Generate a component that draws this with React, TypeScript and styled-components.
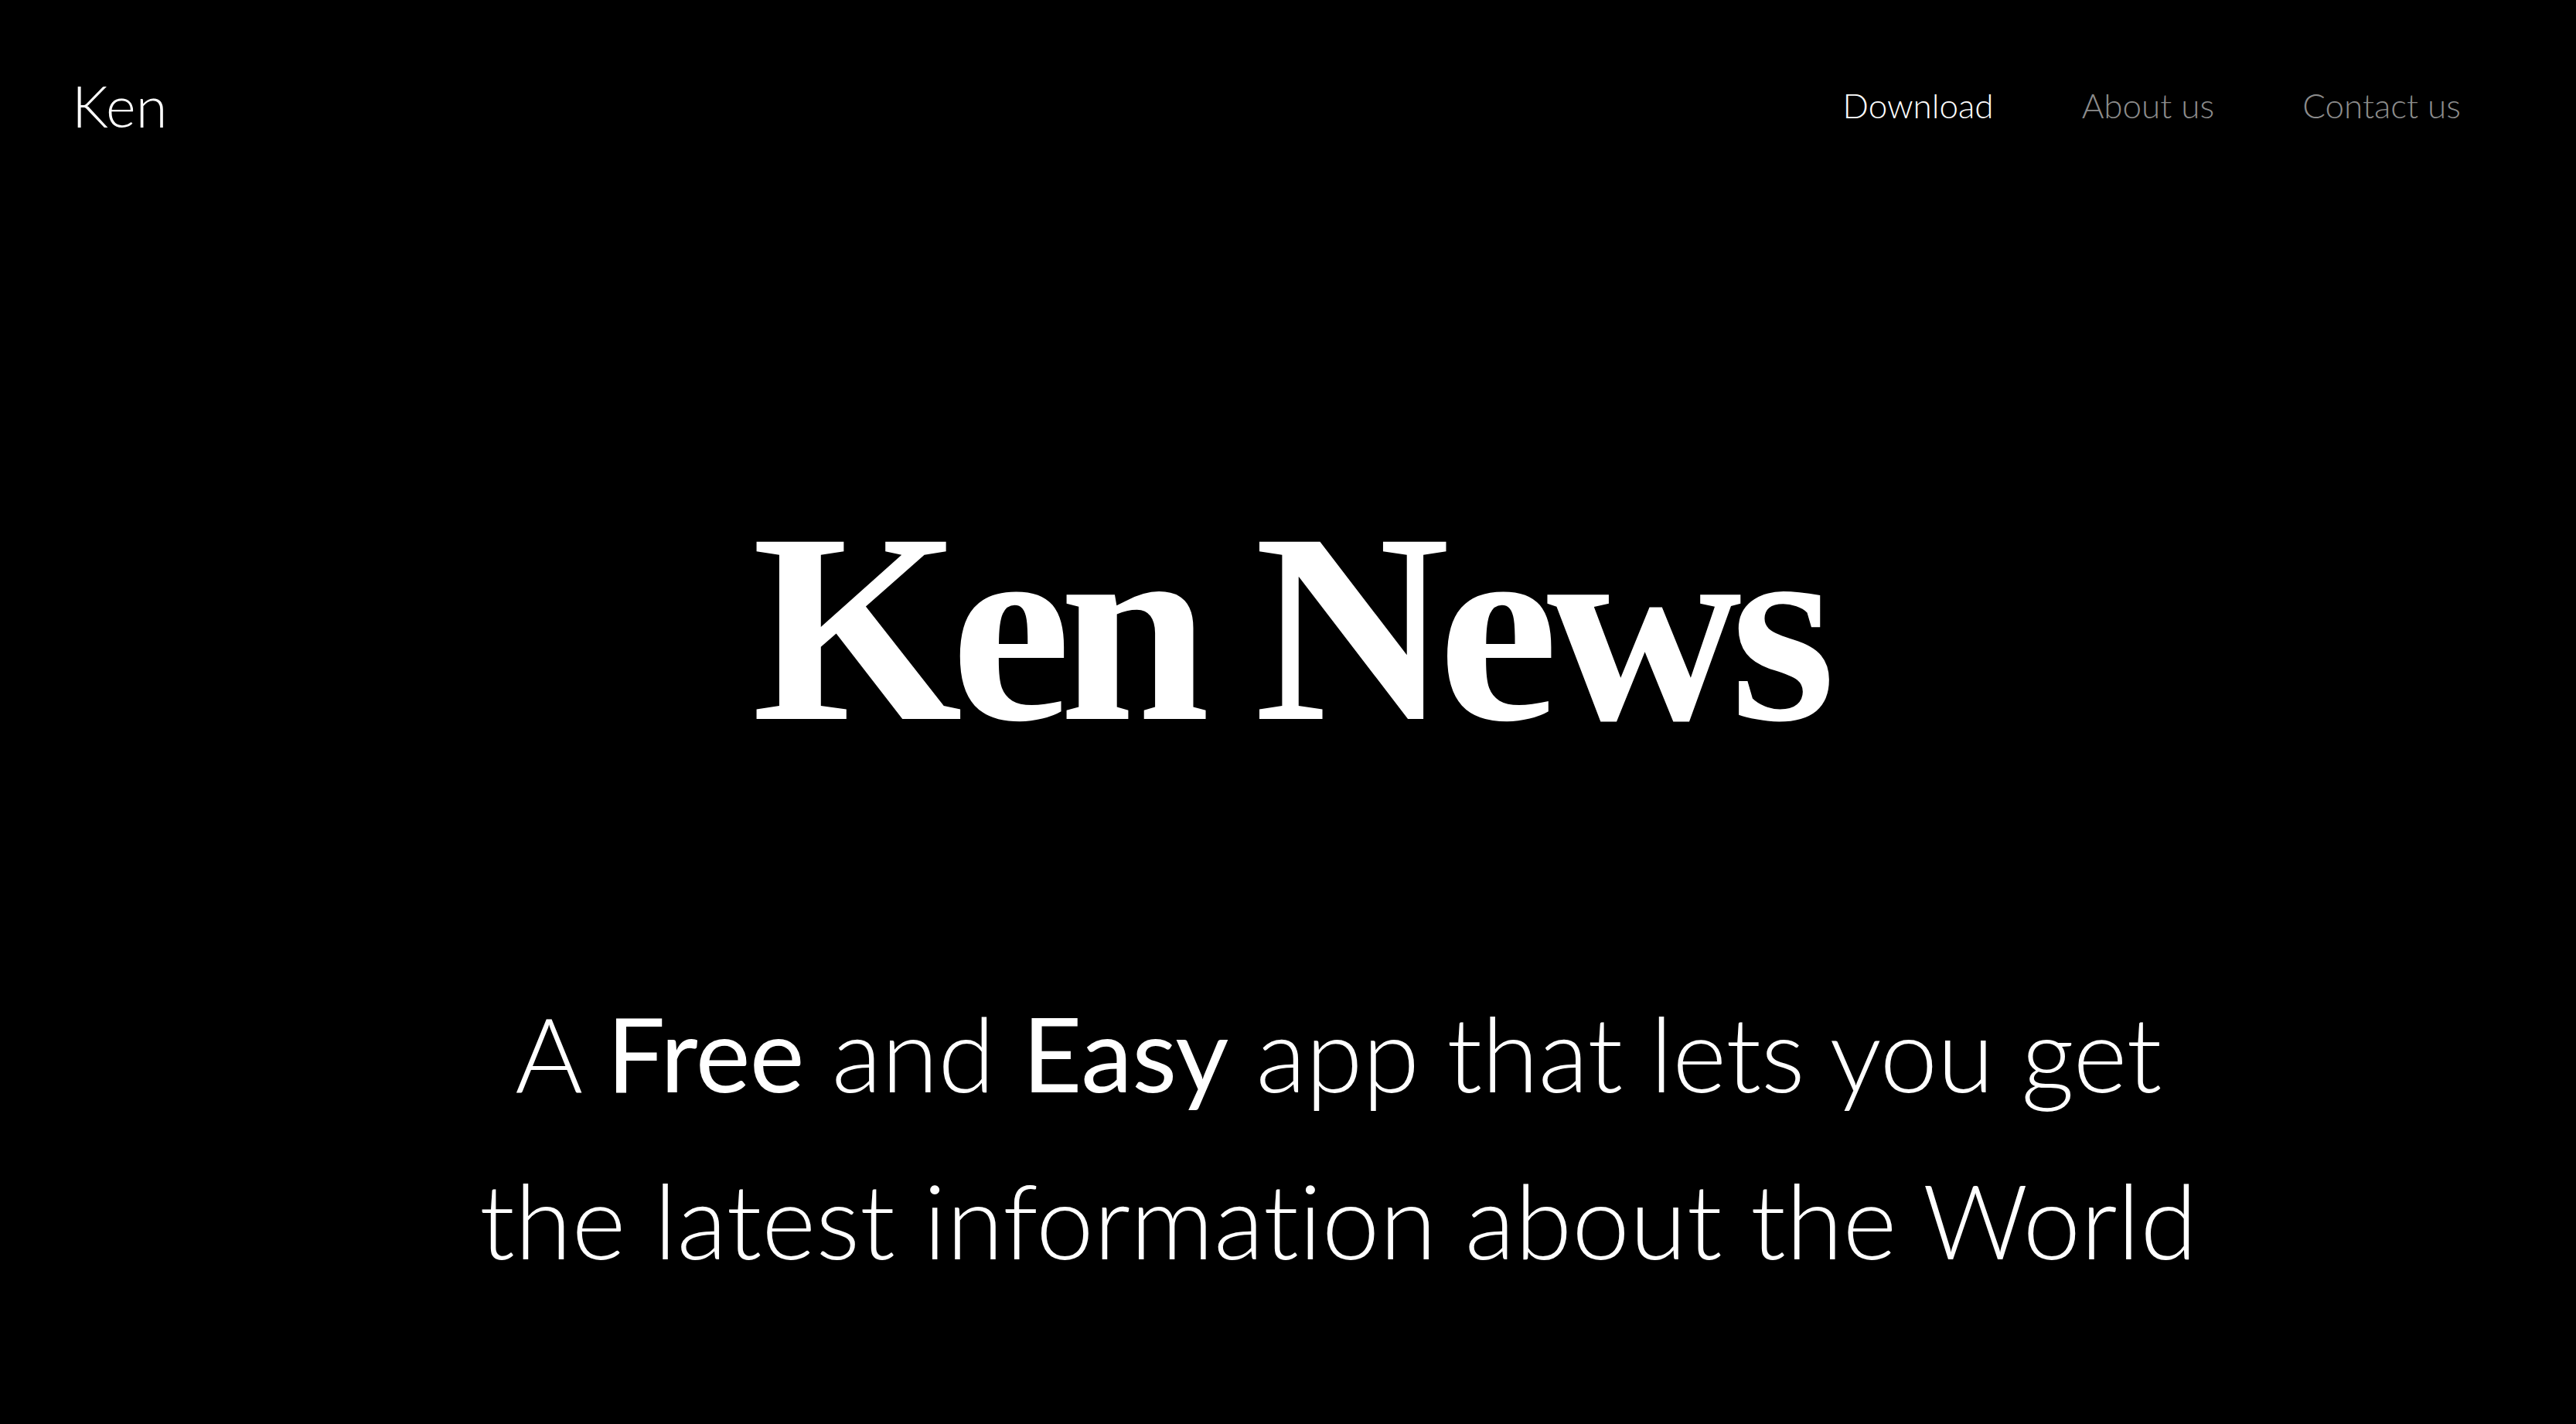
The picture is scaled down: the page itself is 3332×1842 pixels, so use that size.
import React from "react";
import styled, { createGlobalStyle } from "styled-components";

const Global = createGlobalStyle`
  html, body { margin: 0; padding: 0; background: #000; }
  body {
    font-family: Lato, "Open Sans", sans-serif;
    color: #fff;
    font-variant-ligatures: none;
    font-feature-settings: "liga" 0, "clig" 0;
  }
`;

const Page = styled.div`
  width: 100%;
  min-height: 1842px;
  background: #000;
  display: flex;
  flex-direction: column;
`;

const Header = styled.header`
  height: 272px;
  display: flex;
  align-items: center;
  justify-content: space-between;
  padding: 0 149px 0 93px;
  box-sizing: border-box;
`;

const Logo = styled.div`
  font-family: Lato, sans-serif;
  font-weight: 300;
  font-size: 74px;
  color: #fff;
`;

const Nav = styled.nav`
  display: flex;
  align-items: center;
  gap: 114px;
`;

const NavLink = styled.a<{ $active?: boolean }>`
  font-family: Lato, sans-serif;
  font-weight: 300;
  font-size: 44px;
  color: ${(p) => (p.$active ? "#fff" : "#8c8c8c")};
  text-decoration: none;
`;

const Hero = styled.main`
  display: flex;
  flex-direction: column;
  align-items: center;
`;

const Title = styled.h1`
  margin: 365px 0 0;
  font-family: "Liberation Serif", serif;
  font-weight: 700;
  font-size: 350px;
  line-height: 1;
  letter-spacing: -15px;
  color: #fff;
`;

const Subtitle = styled.p`
  margin: 267px 0 0;
  padding-left: 130px;
  text-align: center;
  font-family: Lato, sans-serif;
  font-weight: 300;
  font-size: 134px;
  line-height: 216px;
  color: #fff;
`;

const FirstLine = styled.span`
  letter-spacing: -0.6px;
`;

const Strong = styled.strong`
  font-weight: 400;
`;

export default function App() {
  return (
    <Page>
      <Global />
      <Header>
        <Logo>Ken</Logo>
        <Nav>
          <NavLink $active href="#">Download</NavLink>
          <NavLink href="#">About us</NavLink>
          <NavLink href="#">Contact us</NavLink>
        </Nav>
      </Header>
      <Hero>
        <Title>Ken News</Title>
        <Subtitle>
          <FirstLine>
            A <Strong>Free</Strong> and <Strong>Easy</Strong> app that lets you get
          </FirstLine>
          <br />
          the latest information about the World
        </Subtitle>
      </Hero>
    </Page>
  );
}
